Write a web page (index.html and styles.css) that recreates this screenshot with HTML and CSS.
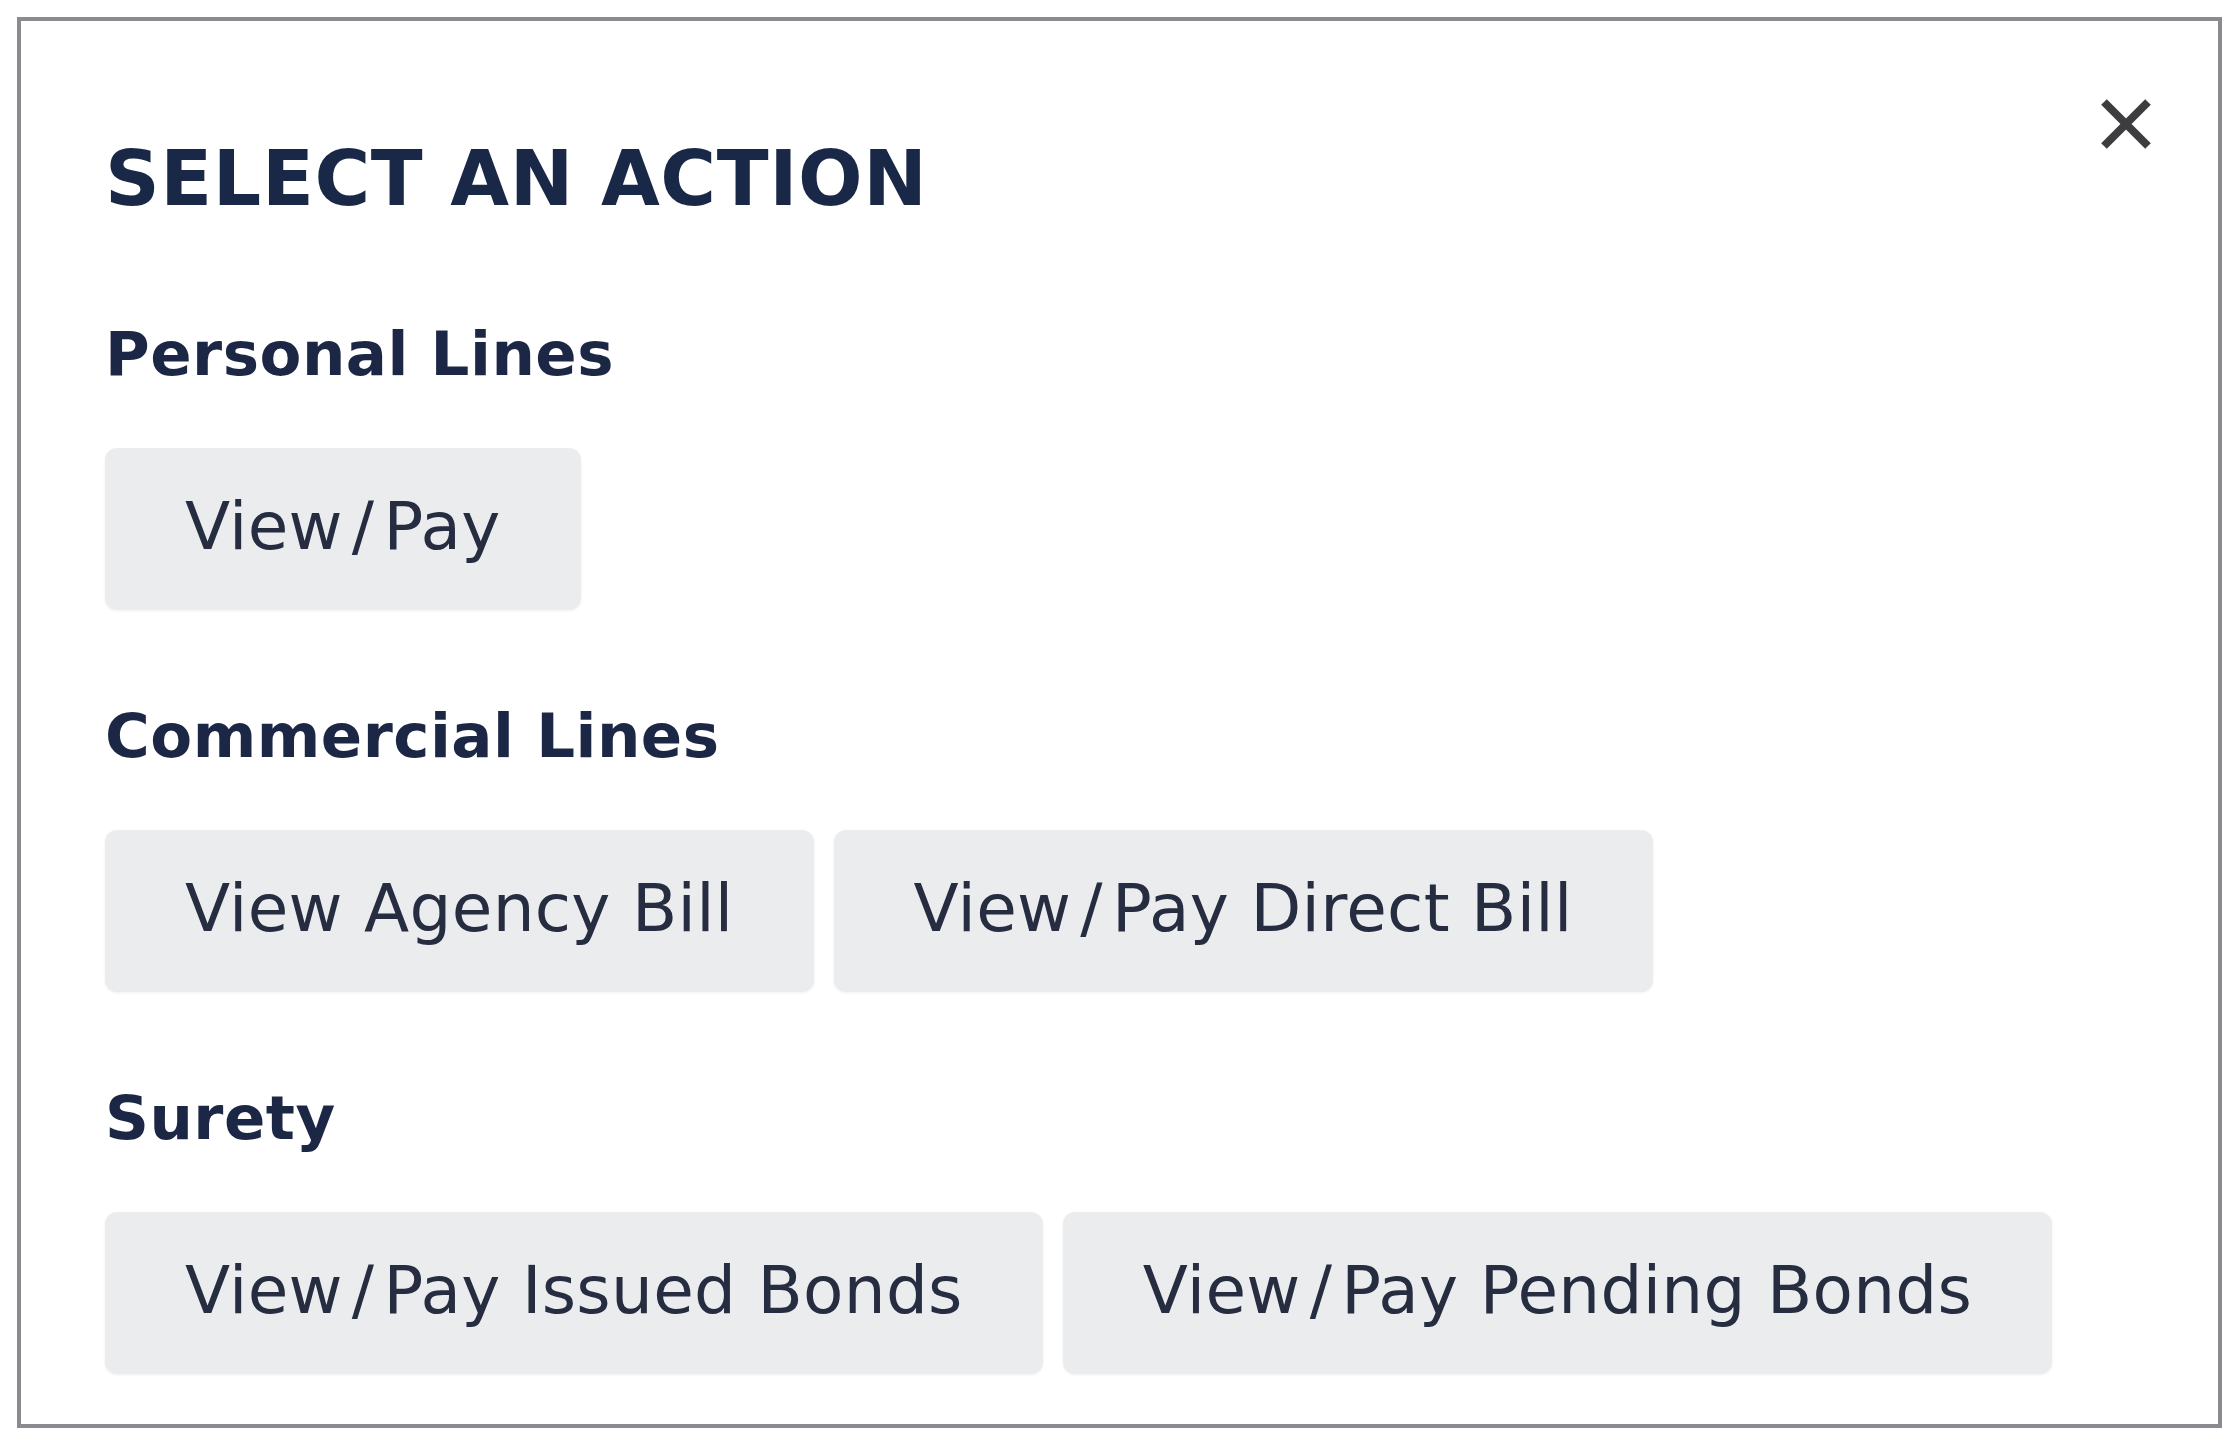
FILE: index.html
```html
<!DOCTYPE html>
<html lang="en">
<head>
    <meta charset="UTF-8">
    <meta name="viewport" content="width=device-width, initial-scale=1.0">
    <title>Select an Action</title>
    <link rel="stylesheet" href="styles.css">
</head>
<body>

<div class="modal">
    <button class="close-btn" aria-label="Close">
        <svg viewBox="0 0 54 54" width="54" height="54">
            <line x1="5" y1="5" x2="49" y2="49" />
            <line x1="49" y1="5" x2="5" y2="49" />
        </svg>
    </button>

    <h1>SELECT AN ACTION</h1>

    <div class="group first">
        <h2>Personal Lines</h2>
        <div class="actions">
            <button class="action">View<span class="sep">/</span>Pay</button>
        </div>
    </div>

    <div class="group">
        <h2>Commercial Lines</h2>
        <div class="actions">
            <button class="action">View Agency Bill</button>
            <button class="action">View<span class="sep">/</span>Pay Direct Bill</button>
        </div>
    </div>

    <div class="group">
        <h2>Surety</h2>
        <div class="actions">
            <button class="action">View<span class="sep">/</span>Pay Issued Bonds</button>
            <button class="action">View<span class="sep">/</span>Pay Pending Bonds</button>
        </div>
    </div>
</div>

</body>
</html>
```

FILE: styles.css
```css
body {
    font-family: "DejaVu Sans", Verdana, sans-serif;
    background-color: white;
    margin: 0;
    padding: 0;
}

.modal {
    position: relative;
    margin: 17px 0 0 17px;
    width: 2205px;
    box-sizing: border-box;
    border: 4px solid #8a8a8f;
    background-color: white;
    padding: 120px 84px 50px 84px;
}

.close-btn {
    position: absolute;
    top: 76px;
    right: 65px;
    width: 54px;
    height: 54px;
    padding: 0;
    border: none;
    background: none;
    cursor: pointer;
}

.close-btn svg {
    display: block;
}

.close-btn line {
    stroke: #3d3d40;
    stroke-width: 8;
}

h1 {
    margin: 0;
    font-size: 76px;
    font-weight: bold;
    line-height: 1;
    letter-spacing: 0.6px;
    color: #1a2848;
}

.group {
    margin-top: 95px;
}

.group.first {
    margin-top: 106px;
}

h2 {
    margin: 0 0 64px 0;
    font-size: 61px;
    font-weight: bold;
    line-height: 1;
    letter-spacing: 0.5px;
    color: #1b2744;
}

.actions {
    display: flex;
    gap: 20px;
}

.action {
    font-family: "DejaVu Sans", Verdana, sans-serif;
    font-size: 66px;
    line-height: 1;
    letter-spacing: 0.3px;
    color: #272d40;
    background-color: #ebecee;
    border: none;
    border-radius: 12px;
    padding: 46px 80px 50px 80px;
    box-shadow: 0 1px 3px rgba(0, 0, 0, 0.06);
    cursor: pointer;
}

.action:hover {
    background-color: #e2e3e6;
}

/* the slash between View and Pay sits a little apart */
.action .sep {
    margin: 0 9px;
}
```
